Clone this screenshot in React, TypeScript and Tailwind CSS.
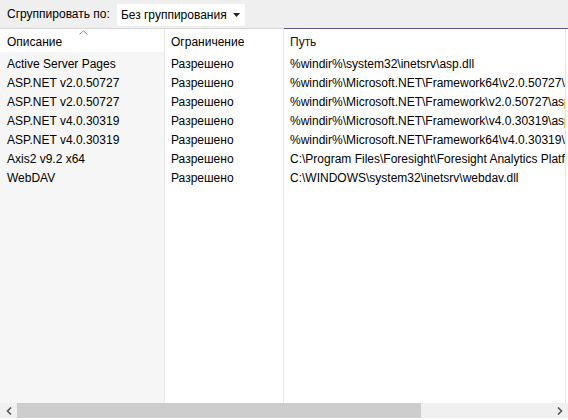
import React from 'react';

const rows = [
  ['Active Server Pages', 'Разрешено', '%windir%\\system32\\inetsrv\\asp.dll'],
  ['ASP.NET v2.0.50727', 'Разрешено', '%windir%\\Microsoft.NET\\Framework64\\v2.0.50727\\aspnet_isapi.dll'],
  ['ASP.NET v2.0.50727', 'Разрешено', '%windir%\\Microsoft.NET\\Framework\\v2.0.50727\\aspnet_isapi.dll'],
  ['ASP.NET v4.0.30319', 'Разрешено', '%windir%\\Microsoft.NET\\Framework\\v4.0.30319\\aspnet_isapi.dll'],
  ['ASP.NET v4.0.30319', 'Разрешено', '%windir%\\Microsoft.NET\\Framework64\\v4.0.30319\\aspnet_isapi.dll'],
  ['Axis2 v9.2 x64', 'Разрешено', 'C:\\Program Files\\Foresight\\Foresight Analytics Platform\\axis2.dll'],
  ['WebDAV', 'Разрешено', 'C:\\WINDOWS\\system32\\inetsrv\\webdav.dll'],
];

export default function App() {
  return (
    <div
      className="w-[568px] h-[420px] flex flex-col bg-white text-[12px] text-black overflow-hidden"
      style={{ fontFamily: '"Liberation Sans", Arial, sans-serif' }}
    >
      {/* toolbar */}
      <div className="h-[28px] shrink-0 bg-[#efefef] flex items-center pl-[7px] gap-[7px]">
        <span>Сгруппировать по:</span>
        <div className="h-[22px] w-[128px] bg-white flex items-center justify-between pl-[4px] pr-[5px] mt-[2px]">
          <span>Без группирования</span>
          <svg width="7" height="4" viewBox="0 0 7 4"><path d="M0 0h7L3.5 4z" fill="#222" /></svg>
        </div>
      </div>
      <div className="h-px shrink-0 flex">
        <div className="w-[284px] bg-[#d6d6d6]" />
        <div className="flex-1 bg-[#5d5a7f]" />
      </div>

      {/* list */}
      <div className="flex-1 flex min-h-0">
        <div className="w-[165px] shrink-0 flex flex-col border-r border-[#e8e8e8]">
          <div className="h-[23px] relative bg-white flex items-end pl-[7px] pb-[1px]">
            <svg className="absolute left-[79px] top-[1px]" width="9" height="5" viewBox="0 0 9 5">
              <path d="M0.5 4.5L4.5 0.8L8.5 4.5" stroke="#8a8a8a" fill="none" />
            </svg>
            <span>Описание</span>
          </div>
          <div className="flex-1 bg-[#f6f6f6] pt-[2px]">
            {rows.map((r, i) => (
              <div key={i} className="h-[19px] flex items-center pl-[7px] whitespace-nowrap">{r[0]}</div>
            ))}
          </div>
        </div>
        <div className="w-[119px] shrink-0 flex flex-col border-r border-[#dde9f2]">
          <div className="h-[23px] flex items-end pl-[6px] pb-[1px]">Ограничение</div>
          <div className="flex-1 pt-[2px]">
            {rows.map((r, i) => (
              <div key={i} className="h-[19px] flex items-center pl-[6px] whitespace-nowrap">{r[1]}</div>
            ))}
          </div>
        </div>
        <div className="flex-1 min-w-0 flex flex-col border-r border-[#e4e4e4] mr-[2px] overflow-hidden">
          <div className="h-[23px] flex items-end pl-[6px] pb-[1px] text-[#2a0a0a]">Путь</div>
          <div className="flex-1 pt-[2px]">
            {rows.map((r, i) => (
              <div key={i} className="h-[19px] flex items-center pl-[6px] whitespace-nowrap">{r[2]}</div>
            ))}
          </div>
        </div>
      </div>

      {/* horizontal scrollbar */}
      <div className="h-[15px] shrink-0 bg-[#f0f0f0] flex items-center mb-[2px]">
        <div className="w-[17px] h-full flex items-center justify-center">
          <svg width="6" height="8" viewBox="0 0 6 8"><path d="M5 0.5L1.5 4L5 7.5" stroke="#555" strokeWidth="1.6" fill="none" /></svg>
        </div>
        <div className="w-[404px] h-full bg-[#cdcdcd]" />
        <div className="flex-1" />
        <div className="w-[17px] h-full flex items-center justify-center">
          <svg width="6" height="8" viewBox="0 0 6 8"><path d="M1 0.5L4.5 4L1 7.5" stroke="#555" strokeWidth="1.6" fill="none" /></svg>
        </div>
      </div>
    </div>
  );
}
